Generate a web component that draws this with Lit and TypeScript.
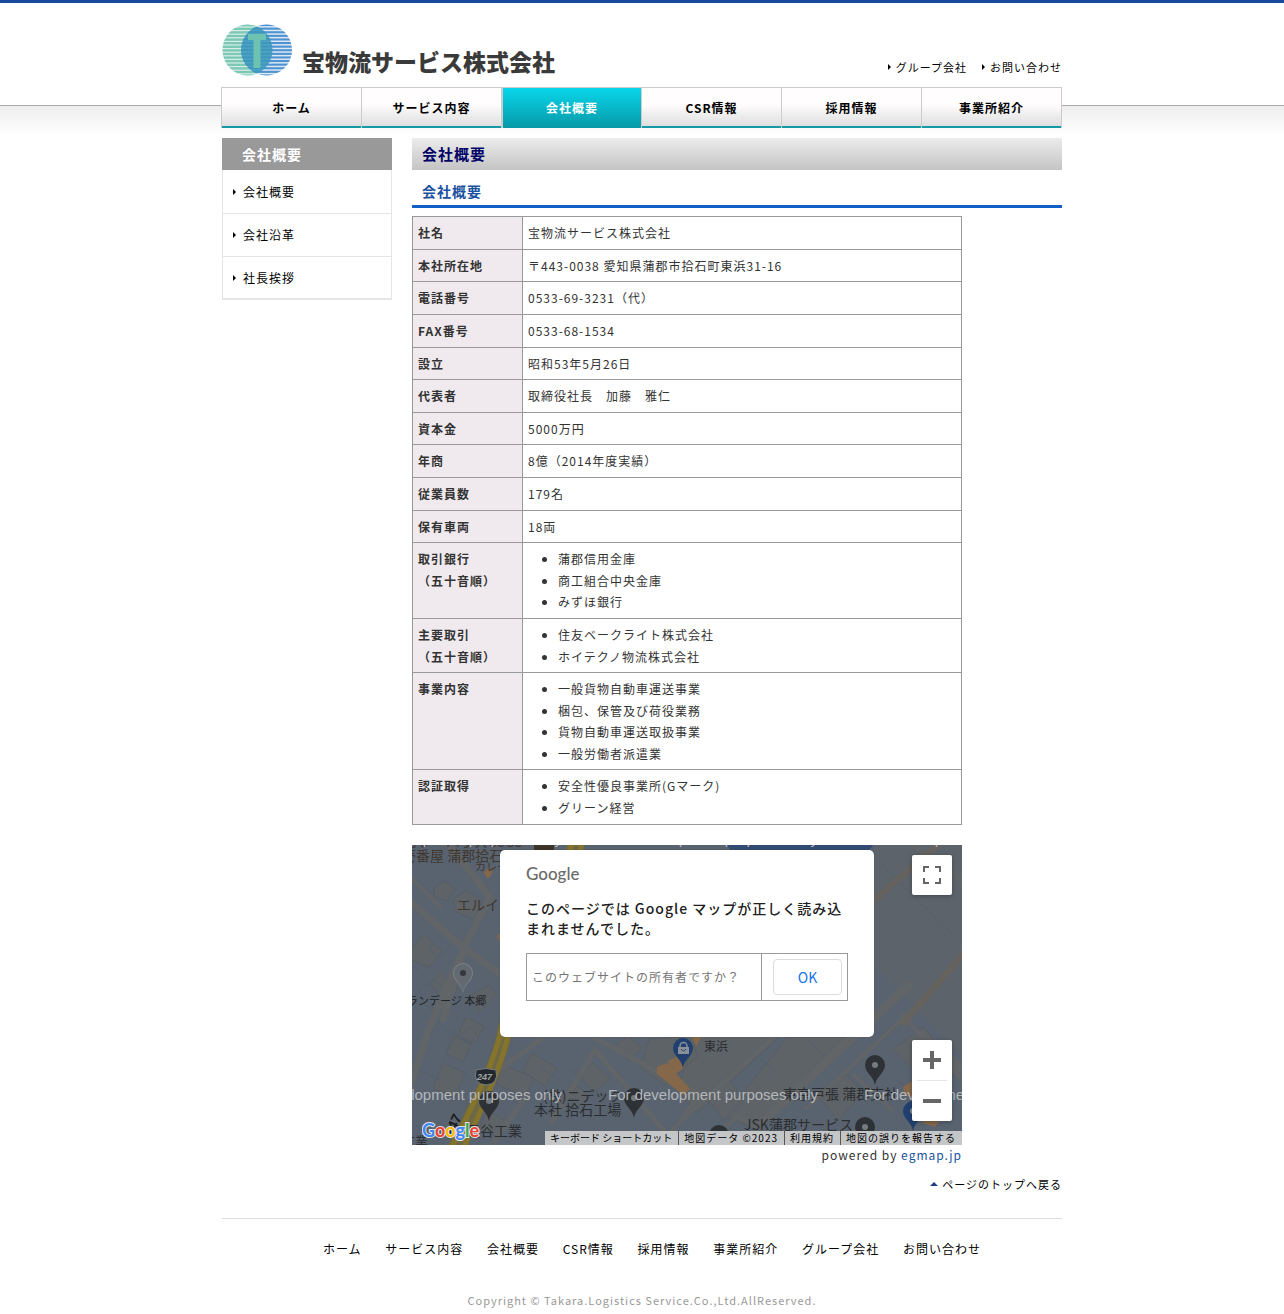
import { LitElement, html, css, svg } from "lit";
import { customElement } from "lit/decorators.js";

interface Row {
  head: string[];
  text?: string;
  list?: string[];
}

const NAV = ["ホーム", "サービス内容", "会社概要", "CSR情報", "採用情報", "事業所紹介"];
const SIDE = ["会社概要", "会社沿革", "社長挨拶"];
const FOOT = [...NAV, "グループ会社", "お問い合わせ"];
const CURRENT = "会社概要";

const ROWS: Row[] = [
  { head: ["社名"], text: "宝物流サービス株式会社" },
  { head: ["本社所在地"], text: "〒443-0038 愛知県蒲郡市拾石町東浜31-16" },
  { head: ["電話番号"], text: "0533-69-3231（代）" },
  { head: ["FAX番号"], text: "0533-68-1534" },
  { head: ["設立"], text: "昭和53年5月26日" },
  { head: ["代表者"], text: "取締役社長　加藤　雅仁" },
  { head: ["資本金"], text: "5000万円" },
  { head: ["年商"], text: "8億（2014年度実績）" },
  { head: ["従業員数"], text: "179名" },
  { head: ["保有車両"], text: "18両" },
  { head: ["取引銀行", "（五十音順）"], list: ["蒲郡信用金庫", "商工組合中央金庫", "みずほ銀行"] },
  { head: ["主要取引", "（五十音順）"], list: ["住友ベークライト株式会社", "ホイテクノ物流株式会社"] },
  {
    head: ["事業内容"],
    list: ["一般貨物自動車運送事業", "梱包、保管及び荷役業務", "貨物自動車運送取扱事業", "一般労働者派遣業"],
  },
  { head: ["認証取得"], list: ["安全性優良事業所(Gマーク)", "グリーン経営"] },
];

@customElement("company-logo")
export class CompanyLogo extends LitElement {
  static styles = css`
    :host { display: block; }
    .logo { display: flex; align-items: flex-end; gap: 10px; color: inherit; text-decoration: none; }
    .mark { display: block; width: 70px; height: 52px; }
    .name {
      font-size: 23px;
      line-height: 30px;
      font-weight: 900;
      color: #3a3a3a;
      letter-spacing: 0;
      margin: 0;
    }
  `;

  render() {
    const ys = Array.from({ length: 15 }, (_, i) => i * 3.6);
    return html`
      <a class="logo" href="#">
        <svg class="mark" viewBox="0 0 70 52" aria-hidden="true">
          <defs>
            <clipPath id="left"><ellipse cx="25.5" cy="26" rx="25" ry="25.5" /></clipPath>
            <clipPath id="right"><ellipse cx="44.5" cy="26" rx="25.5" ry="25.5" /></clipPath>
          </defs>
          <g clip-path="url(#left)">
            <rect width="52" height="52" fill="#d6eee7" />
            ${ys.map((y) => svg`<rect x="0" y=${y} width="51" height="2.4" fill="#7cc8b4" />`)}
          </g>
          <g clip-path="url(#right)">
            <rect x="18" width="52" height="52" fill="#d8e8f5" />
            ${ys.map((y) => svg`<rect x="18" y=${y} width="52" height="2.1" fill="#4f92cf" />`)}
            <ellipse cx="25.5" cy="26" rx="25" ry="25.5" fill="#4ba3c2" />
            ${ys.map((y) => svg`<rect x="18" y=${y} width="33" height="1.8" fill="#3f95bd" clip-path="url(#left)" />`)}
          </g>
          <path d="M26 10H44V16H38.500V44H31.500V16H26Z" fill="#6cc3b2" />
        </svg>
        <p class="name">宝物流サービス株式会社</p>
      </a>
    `;
  }
}

@customElement("access-map")
export class AccessMap extends LitElement {
  static styles = css`
    :host { display: block; }
    * { box-sizing: border-box; }
    .map { position: relative; height: 300px; overflow: hidden; background: #5b646e; }
    .canvas { display: block; width: 100%; height: 300px; }
    .jp { font-family: "Noto Sans CJK JP", sans-serif; letter-spacing: 0; }
    .water { font-family: "Liberation Sans", sans-serif; font-size: 15px; letter-spacing: 0; fill: #b4b7ba; }
    .dialog {
      position: absolute;
      left: 88px;
      top: 5px;
      width: 374px;
      height: 187px;
      padding: 14px 26px 0;
      background: #fff;
      border-radius: 5px;
      box-shadow: 0 0 1px #333;
    }
    .brand {
      margin: 0;
      font: 500 17px/20px Lato, sans-serif;
      letter-spacing: 0;
      color: #6b6b6b;
    }
    .message { margin: 14px 0 15px; font-size: 14px; line-height: 20px; font-weight: 500; color: #212121; }
    .choice { display: flex; height: 48px; border: 1px solid #999; }
    .owner { flex: 1; padding: 0 5px; font-size: 12px; line-height: 46px; color: #757575; text-decoration: none; }
    .confirm { display: flex; width: 86px; padding: 5px 5px 5px 11px; border-left: 1px solid #999; }
    .ok {
      flex: 1;
      border: 1px solid #dadce0;
      border-radius: 4px;
      background: #fff;
      color: #1a73e8;
      font: 400 14px/20px "Noto Sans CJK JP", sans-serif;
      padding: 0;
    }
    .tool {
      position: absolute;
      right: 10px;
      width: 40px;
      background: #fff;
      border-radius: 2px;
      box-shadow: 0 1px 4px rgba(0, 0, 0, 0.3);
    }
    .full { top: 10px; }
    .zoom { top: 195px; }
    .btn { display: block; width: 40px; height: 40px; border: 0; padding: 11px; background: none; }
    .btn svg { display: block; width: 18px; height: 18px; }
    .rule { height: 1px; margin: 0 5px; background: #e6e6e6; }
    .google {
      position: absolute;
      left: 10px;
      top: 275px;
      font: 700 18px/24px Lato, sans-serif;
      letter-spacing: 0;
      text-decoration: none;
    }
    .glyph { paint-order: stroke; stroke: #e4e4e4; stroke-width: 2px; }
    .google svg { display: block; }
    .credits {
      position: absolute;
      right: 0;
      bottom: 0;
      display: flex;
      height: 14px;
      background: #c5c6c8;
      font-size: 10px;
      line-height: 14px;
      white-space: nowrap;
    }
    .credit { padding: 0 6px 0 5px; border: 0; background: none; color: #000; text-decoration: none; font: inherit; letter-spacing: inherit; }
    .tight { letter-spacing: 0; }
    .credit + .credit { border-left: 1px solid #555; }
  `;

  private pin(x: number, y: number, fill: string, dot: string) {
    return svg`
      <path transform="translate(${x} ${y})" fill=${fill}
        d="M0 30C-2 20-10 18-10 10A10 10 0 0 1 10 10C10 18 2 20 0 30Z" />
      <circle cx=${x} cy=${y + 10} r="3" fill=${dot} />
    `;
  }

  render() {
    return html`
      <div class="map">
        <svg class="canvas" viewBox="0 0 550 300" preserveAspectRatio="xMidYMid slice" aria-hidden="true">
          <rect width="550" height="300" fill="#59636f" />
          <path d="M462 0H550V210L462 120Z" fill="#5c636b" />
          <path d="M315 0H461L455 8H320Z" fill="#314b73" />
          <g fill="#5e6367" stroke="#575d63" stroke-width="1">
            <path d="M22 43l10-7 11 8-8 12-12-4zM41 54l14-9 15 12-9 17-18-8zM0 103l12-14 18 18-13 15-17-7zM18 139l10-12 18 17-12 15zM60 150l17-10 8 10-18 17z" />
            <path d="M54 172l18 9-9 18-17-9zM41 191l18 8-8 18-17-9zM31 218l22 10-10 25-22-10zM92 220l30 13-9 18-29-12zM120 208l25 15-12 18-22-14zM75 266l20 10-9 16-19-9z" />
            <path d="M203 201l13-10 14 12-13 13zM237 194l44-3 4 21-32 28-24-17zM286 191h82l-83 77-21-24zM375 192h70l-98 94-34-15z" />
            <path d="M167 230l14-12 17 15-16 15zM155 249l12-8 10 12-14 11zM293 251l24-16 15 20-20 20zM404 248l30-18 18 17-26 29zM481 204l31-22 15 20-24 24z" />
          </g>
          <g fill="none" stroke="#53606c" stroke-width="1">
            <path d="M7 144l16-8 17 14-10 18-17-7zM17 160l15 9-14 23M28 180l17 10-15 26M6 225l22 10M128 222l24 17M154 221l19 16M398 197l22 21M348 213l16 15M480 231l32 28M0 120l44 43M470 20l71 70" />
            <path d="M25 93l12 7-8 13-12-8zM80 203l10 4-4 12-11-4zM52 187a6 6 0 1 0 10 6a6 6 0 1 0-10-6" />
          </g>
          <g fill="none" stroke="#626567" stroke-linecap="round">
            <path stroke-width="7" d="M-5 54L52 103L92 132M33-5L78 52L52 103L17 184L-4 248M52 103L31 174" />
            <path stroke-width="5" d="M87 225L140 186M140 276L183 205L265 301M183 193L288 250L250 301M183 193L215 178M80 300L115 250" />
            <path stroke-width="4" d="M270 275L392 165M500 0L550 36M290 301L326 271L370 301M394 263L520 147M490 170L550 235M442 230L480 265M0 34L28 62" />
            <path stroke-width="9" d="M349 278L496 141M510 191L550 224" />
          </g>
          <g fill="none" stroke="#66635f" stroke-width="6">
            <path d="M462 55L540-12M490 180L552 108" />
          </g>
          <path d="M163-4C148 84 102 132 92 190Q85 225 42 304" fill="none" stroke="#6d6846" stroke-width="15" />
          <path d="M160-4C146 84 98 132 88 190Q81 222 39 304M170-4C158 84 107 132 96 190Q89 225 51 304" fill="none" stroke="#85742a" stroke-width="5" />
          <path d="M122 0h20v5h-20z" fill="#3c3427" />
          <path d="M256 216l12-6 5 12-12 9zM245 222l10-4 23 26-7 6-26-21zM280 192h9l-5 10zM491 242l14-9 7 7-9 13-11-3zM511 269l11-4 8 8-7 9-12-4zM72 28l5-6 4 5-5 7zM85 91l3-3v9z" fill="#85684a" />

          ${this.pin(51, 118, "#7b8186", "#34383c")}
          <path transform="translate(51 119)" fill="#626970" d="M0 27C-2 19-9 16-9 9A9 9 0 0 1 9 9C9 16 2 19 0 27Z" />
          <circle cx="51" cy="128" r="3" fill="#34383c" />
          ${this.pin(77, 246, "#2e3236", "#767b7e")}
          ${this.pin(222, 243, "#2e3236", "#767b7e")}
          ${this.pin(463, 210, "#2e3236", "#767b7e")}
          ${this.pin(307, 280, "#2e3236", "#767b7e")}
          ${this.pin(453, 272, "#2e3236", "#767b7e")}
          ${this.pin(271, 193, "#22406f", "#22406f")}
          ${this.pin(501, 256, "#22406f", "#8a9099")}
          <path d="M266 202h11v7h-11z" fill="#8a9099" />
          <path d="M268 202v-1a3 3 0 0 1 7 0v1" fill="none" stroke="#8a9099" stroke-width="1.5" />
          <path d="M269 204q2.500 4 5 0" fill="none" stroke="#22406f" />

          <g class="jp" fill="#2b2e31">
            <text x="-10" y="16" font-size="14" fill="#40372f">壱番屋 蒲郡拾石</text>
            <text x="-8" y="2" font-size="14" fill="#40372f">カレーハウスCoCo</text>
            <text x="63" y="26" font-size="11" fill="#40372f">カレー</text>
            <text x="45" y="65" font-size="14" fill="#40372f">エルイン</text>
            <text x="-5" y="160" font-size="11" fill="#202326">ランデージ 本郷</text>
            <text x="292" y="206" font-size="12">東浜</text>
            <text x="131" y="256" font-size="14">(株)ニデック</text>
            <text x="122" y="270" font-size="14">本社 拾石工場</text>
            <text x="54" y="291" font-size="14">長谷工業</text>
            <text x="-10" y="301" font-size="13">工業</text>
            <text x="371" y="254" font-size="14">東京戸張 蒲郡支社</text>
            <text x="332" y="285" font-size="14">JSK蒲郡サービス</text>
          </g>
          <path d="M64 225q10-3 20 0q3 14-10 15q-13-1-10-15z" fill="#23282e" stroke="#777d82" />
          <text x="65" y="235" font-size="9" font-weight="700" font-style="italic" fill="#a0a4a8" font-family="Liberation Sans, sans-serif" letter-spacing="0">247</text>
          <text transform="translate(40 293) rotate(-64)" font-size="14" font-weight="700" fill="#191b1c" font-family="Liberation Sans, sans-serif" letter-spacing="0">247</text>
          <g class="water">
            <text x="-60" y="255">For development purposes only</text>
            <text x="196" y="255">For development purposes only</text>
            <text x="452" y="255">For development purposes only</text>
            <text x="-60" y="-1">For development purposes only</text>
            <text x="196" y="-1">For development purposes only</text>
            <text x="452" y="-1">For development purposes only</text>
          </g>
        </svg>

        <div class="dialog" role="dialog" aria-label="Google">
          <p class="brand">Google</p>
          <p class="message">このページでは Google マップが正しく読み込まれませんでした。</p>
          <div class="choice">
            <a class="owner" href="#">このウェブサイトの所有者ですか？</a>
            <div class="confirm"><button class="ok" type="button">OK</button></div>
          </div>
        </div>

        <div class="tool full">
          <button class="btn" type="button" aria-label="全画面">
            <svg viewBox="0 0 18 18"><path d="M0 0v6h2V2h4V0zM12 0v2h4v4h2V0zM0 12v6h6v-2H2v-4zM16 12v4h-4v2h6v-6z" fill="#666" /></svg>
          </button>
        </div>
        <div class="tool zoom">
          <button class="btn" type="button" aria-label="拡大">
            <svg viewBox="0 0 18 18"><path d="M7 0h4v7h7v4h-7v7H7v-7H0V7h7z" fill="#666" /></svg>
          </button>
          <div class="rule"></div>
          <button class="btn" type="button" aria-label="縮小">
            <svg viewBox="0 0 18 18"><path d="M0 7h18v4H0z" fill="#666" /></svg>
          </button>
        </div>

        <a class="google" href="#" aria-label="Google">
          <svg width="66" height="25" viewBox="0 0 66 25" aria-hidden="true">
            <text class="glyph" x="0" y="17"><tspan fill="#4285f4">G</tspan><tspan fill="#e94235">o</tspan><tspan fill="#fabb05">o</tspan><tspan fill="#4285f4">g</tspan><tspan fill="#34a853">l</tspan><tspan fill="#e94235">e</tspan></text>
          </svg>
        </a>
        <div class="credits">
          <button class="credit tight" type="button">キーボード ショートカット</button>
          <span class="credit">地図データ ©2023</span>
          <a class="credit" href="#">利用規約</a>
          <a class="credit" href="#">地図の誤りを報告する</a>
        </div>
      </div>
    `;
  }
}

@customElement("app-root")
export class AppRoot extends LitElement {
  static styles = css`
    :host {
      display: block;
      font-family: "Noto Sans CJK JP", "Noto Sans", sans-serif;
      font-size: 12px;
      line-height: 1.8;
      letter-spacing: 1px;
      color: #333;
    }
    * { box-sizing: border-box; }
    h1, h2, h3, p, ul { margin: 0; padding: 0; }
    ul { list-style: none; }
    a { color: #000; text-decoration: none; }
    .page {
      border-top: 3px solid #174a9c;
      background: linear-gradient(#aaa 0 1px, #eee 1px, #fff 30px) 0 102px / 100% 30px no-repeat #fff;
    }
    .wrap { max-width: 840px; margin: 0 auto; }
    .header { display: flex; justify-content: space-between; align-items: flex-end; height: 84px; padding-bottom: 9px; }
    .brand { padding-bottom: 2px; }
    .links { display: flex; gap: 15px; font-size: 11px; line-height: 22px; }
    .arrow { display: flex; align-items: center; gap: 5px; }
    .arrow::before { content: ""; border-left: 3px solid #000; border-top: 3px solid transparent; border-bottom: 3px solid transparent; }
    .nav { display: grid; grid-template-columns: repeat(6, 1fr); margin-left: -1px; border-right: 1px solid #ccc; }
    .tab {
      display: block;
      height: 41px;
      border-top: 1px solid #ccc;
      border-left: 1px solid #ccc;
      text-align: center;
      font-weight: 700;
      line-height: 40px;
      background: linear-gradient(#139aa6, #139aa6) 0 100% / 100% 2px no-repeat, linear-gradient(#fffdfe 40%, #dcdcdc);
    }
    .tab.on { color: #fff; border-left-width: 2px; background: linear-gradient(#09d6ea, #0699a8); }
    .body { display: grid; grid-template-columns: 170px minmax(0, 1fr); gap: 20px; padding-top: 10px; align-items: start; }
    .side-title { height: 32px; padding-left: 20px; background: #999; color: #fff; font-size: 14px; line-height: 32px; }
    .side-list { border: 1px solid #e5e5e5; border-top: 0; }
    .side-link { height: 42px; padding-left: 10px; gap: 7px; }
    .side-list li { border-bottom: 1px solid #e5e5e5; }
    .side-list li:first-child .side-link { height: 43px; }
    .side-list li:last-child .side-link { height: 41px; }
    .title { height: 32px; padding-left: 10px; font-size: 15px; line-height: 32px; color: #000066; background: linear-gradient(#ececec, #c4c4c4); }
    .sub { margin-bottom: 8px; padding: 9px 10px 1px; font-size: 14px; color: #1a52a0; border-bottom: 3px solid #1060c8; }
    .facts { width: 100%; max-width: 550px; border-collapse: collapse; }
    .facts th, .facts td { border: 1px solid #999; padding: 5px; text-align: left; vertical-align: top; }
    .facts th { width: 110px; background: #f0eaee; }
    .line { display: block; }
    .bullets { list-style: disc; padding-left: 30px; }
    .access { max-width: 550px; margin-top: 20px; }
    .powered { text-align: right; line-height: 20px; }
    .powered a { color: #1a52a0; }
    .top { display: flex; justify-content: flex-end; margin-top: 7px; font-size: 11px; line-height: 24px; }
    .up { display: flex; align-items: center; gap: 4px; }
    .up::before { content: ""; border-bottom: 4px solid #1d3e82; border-left: 4px solid transparent; border-right: 4px solid transparent; }
    .footer { margin-top: 22px; border-top: 1px solid #ddd; padding-top: 19px; }
    .foot-nav { text-align: center; line-height: 22px; }
    .foot-nav li { display: inline-block; margin-left: 20px; }
    .copy { margin-top: 29px; padding-bottom: 2px; text-align: center; font-size: 11px; line-height: 22px; color: #999; }
  `;

  render() {
    return html`
      <div class="page">
        <div class="wrap">
          <header class="header">
            <h1 class="brand"><company-logo></company-logo></h1>
            <div class="links">
              <a class="arrow" href="#">グループ会社</a>
              <a class="arrow" href="#">お問い合わせ</a>
            </div>
          </header>
          <nav class="nav">
            ${NAV.map((n) => html`<a class="tab ${n === CURRENT ? "on" : ""}" href="#">${n}</a>`)}
          </nav>
          <div class="body">
            <aside>
              <h2 class="side-title">会社概要</h2>
              <ul class="side-list">
                ${SIDE.map((s) => html`<li><a class="arrow side-link" href="#">${s}</a></li>`)}
              </ul>
            </aside>
            <main>
              <h2 class="title">会社概要</h2>
              <h3 class="sub">会社概要</h3>
              <table class="facts">
                <tbody>
                  ${ROWS.map(
                    (r) => html`<tr>
                      <th scope="row">${r.head.map((h) => html`<span class="line">${h}</span>`)}</th>
                      <td>
                        ${r.list ? html`<ul class="bullets">${r.list.map((l) => html`<li>${l}</li>`)}</ul>` : r.text}
                      </td>
                    </tr>`
                  )}
                </tbody>
              </table>
              <div class="access">
                <access-map></access-map>
                <p class="powered">powered by <a href="#">egmap.jp</a></p>
              </div>
            </main>
          </div>
          <p class="top"><a class="up" href="#">ページのトップへ戻る</a></p>
          <footer class="footer">
            <ul class="foot-nav">
              ${FOOT.map((f) => html`<li><a href="#">${f}</a></li> `)}
            </ul>
            <p class="copy">Copyright © Takara.Logistics Service.Co.,Ltd.AllReserved.</p>
          </footer>
        </div>
      </div>
    `;
  }
}
